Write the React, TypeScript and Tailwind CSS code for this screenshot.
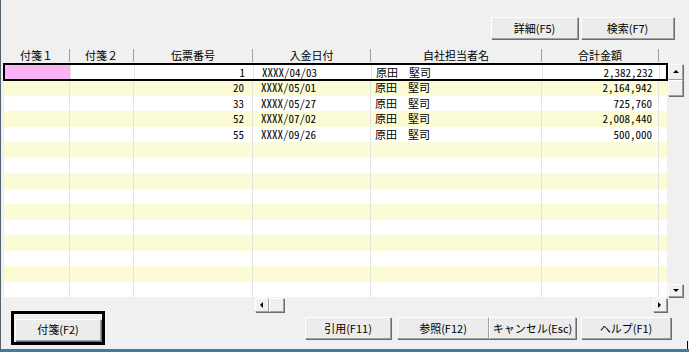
import React from 'react';

const font = { fontFamily: '"Noto Sans CJK JP", "Noto Sans", sans-serif' };
const mono = { fontFamily: '"Noto Sans Mono CJK JP", "Liberation Mono", monospace' };

const columns = [
  { label: '付箋１', width: 'w-[66px]' },
  { label: '付箋２', width: 'w-[64px]' },
  { label: '伝票番号', width: 'w-[119px]' },
  { label: '入金日付', width: 'w-[118px]' },
  { label: '自社担当者名', width: 'w-[171px]' },
  { label: '合計金額', width: 'w-[117px]' }
];

const records = [
  { no: '1', date: 'XXXX/04/03', staff: '原田　堅司', total: '2,382,232' },
  { no: '20', date: 'XXXX/05/01', staff: '原田　堅司', total: '2,164,942' },
  { no: '33', date: 'XXXX/05/27', staff: '原田　堅司', total: '725,760' },
  { no: '52', date: 'XXXX/07/02', staff: '原田　堅司', total: '2,008,440' },
  { no: '55', date: 'XXXX/09/26', staff: '原田　堅司', total: '500,000' }
];

const Btn = ({ label, className = '' }: { label: string; className?: string }) => (
  <button
    className={`h-[22px] bg-[#ececec] border border-t-white border-l-white border-r-[#a0a0a0] border-b-[#a0a0a0] shadow-[1px_1px_0_#6d6d6d] text-[11px] leading-none text-black whitespace-nowrap ${className}`}>
    {label}
  </button>
);

const Arrow = ({ dir }: { dir: 'up' | 'down' | 'left' | 'right' }) => {
  const pts = {
    up: '1,5 4,2 7,5',
    down: '1,2 4,5 7,2',
    left: '5,1 2,4 5,7',
    right: '2,1 5,4 2,7'
  }[dir];
  return (
    <svg width="8" height="8" viewBox="0 0 8 8">
      <polygon points={pts} fill="#000" />
    </svg>
  );
};

const ScrollBox = ({ dir, className = '' }: { dir?: 'up' | 'down' | 'left' | 'right'; className?: string }) => (
  <div
    className={`flex items-center justify-center bg-[#f0f0f0] border border-t-white border-l-white border-r-[#a0a0a0] border-b-[#a0a0a0] shadow-[1px_1px_0_#6d6d6d] ${className}`}>
    {dir && <Arrow dir={dir} />}
  </div>
);

export default function App() {
  const rows = Array.from({ length: 15 }, (_, i) => records[i]);

  return (
    <div
      className="relative w-[689px] h-[352px] bg-[#f0f0f0] border-l border-l-[#55626e] border-b-[3px] border-b-[#3d7c9c] overflow-hidden text-black"
      style={font}>
      {/* top buttons */}
      <div className="h-[46px] flex items-start justify-end pt-[17px] pr-[15px] gap-[3px]">
        <Btn label="詳細(F5)" className="w-[87px]" />
        <Btn label="検索(F7)" className="w-[93px]" />
      </div>

      {/* grid */}
      <div className="flex ml-[3px]">
        <div className="w-[663px]">
          <div className="flex h-[18px] items-center text-[11px]">
            {columns.map((c) => (
              <div key={c.label} className={`${c.width} flex items-center h-full`}>
                <span className="flex-1 text-center leading-none">{c.label}</span>
                <div className="w-px h-[13px] bg-[#a0a0a0]" />
              </div>
            ))}
          </div>
          {rows.map((r, i) => (
            <div
              key={i}
              className={`flex text-[11px] leading-none ${
                i === 0
                  ? 'h-[16px] bg-white outline-2 outline-black -outline-offset-1 relative'
                  : `h-[15.5px] ${i % 2 === 1 ? 'bg-[#fbfbd6]' : 'bg-white'}`
              }`}>
              <div className={`w-[66px] border-r border-[#e3e3e3] ${i === 0 ? 'bg-[#fab4f6] mt-px mb-px ml-px' : ''}`} />
              <div className="w-[64px] border-r border-[#e3e3e3]" />
              <div className="w-[119px] border-r border-[#e3e3e3] flex items-center justify-end pr-[8px]" style={mono}>
                {r?.no}
              </div>
              <div className="w-[118px] border-r border-[#e3e3e3] flex items-center pl-[8px]" style={mono}>
                {r?.date}
              </div>
              <div className="w-[171px] border-r border-[#e3e3e3] flex items-center pl-[4px]">{r?.staff}</div>
              <div className="w-[117px] border-r border-[#e3e3e3] flex items-center justify-end pr-[6px]" style={mono}>
                {r?.total}
              </div>
              <div className="flex-1" />
            </div>
          ))}
        </div>
        <div className="w-[17px] pt-[18px] pl-px flex flex-col">
          <ScrollBox dir="up" className="w-[15px] h-[16px]" />
          <ScrollBox className="w-[15px] h-[16px]" />
          <div className="flex-1" />
          <ScrollBox dir="down" className="w-[15px] h-[13px]" />
        </div>
      </div>

      {/* horizontal scroll */}
      <div className="flex h-[16px] ml-[254px] w-[412px] pt-px">
        <ScrollBox dir="left" className="w-[14px] h-[14px]" />
        <ScrollBox className="w-[15px] h-[14px]" />
        <div className="flex-1" />
        <ScrollBox dir="right" className="w-[14px] h-[14px]" />
      </div>

      {/* bottom buttons */}
      <div className="flex items-center h-[30px] pl-[10px]">
        <div className="border-[3px] border-black p-px">
          <Btn label="付箋(F2)" className="w-[86px]" />
        </div>
        <div className="flex gap-[6px] ml-[200px]">
          <Btn label="引用(F11)" className="w-[86px]" />
          <div className="flex">
            <Btn label="参照(F12)" className="w-[92px]" />
            <Btn label="キャンセル(Esc)" className="w-[87px]" />
          </div>
          <Btn label="ヘルプ(F1)" className="w-[90px] -ml-px" />
        </div>
      </div>
      <div className="absolute right-[1px] bottom-0 w-px h-[8px] bg-black" />
    </div>
  );
}
